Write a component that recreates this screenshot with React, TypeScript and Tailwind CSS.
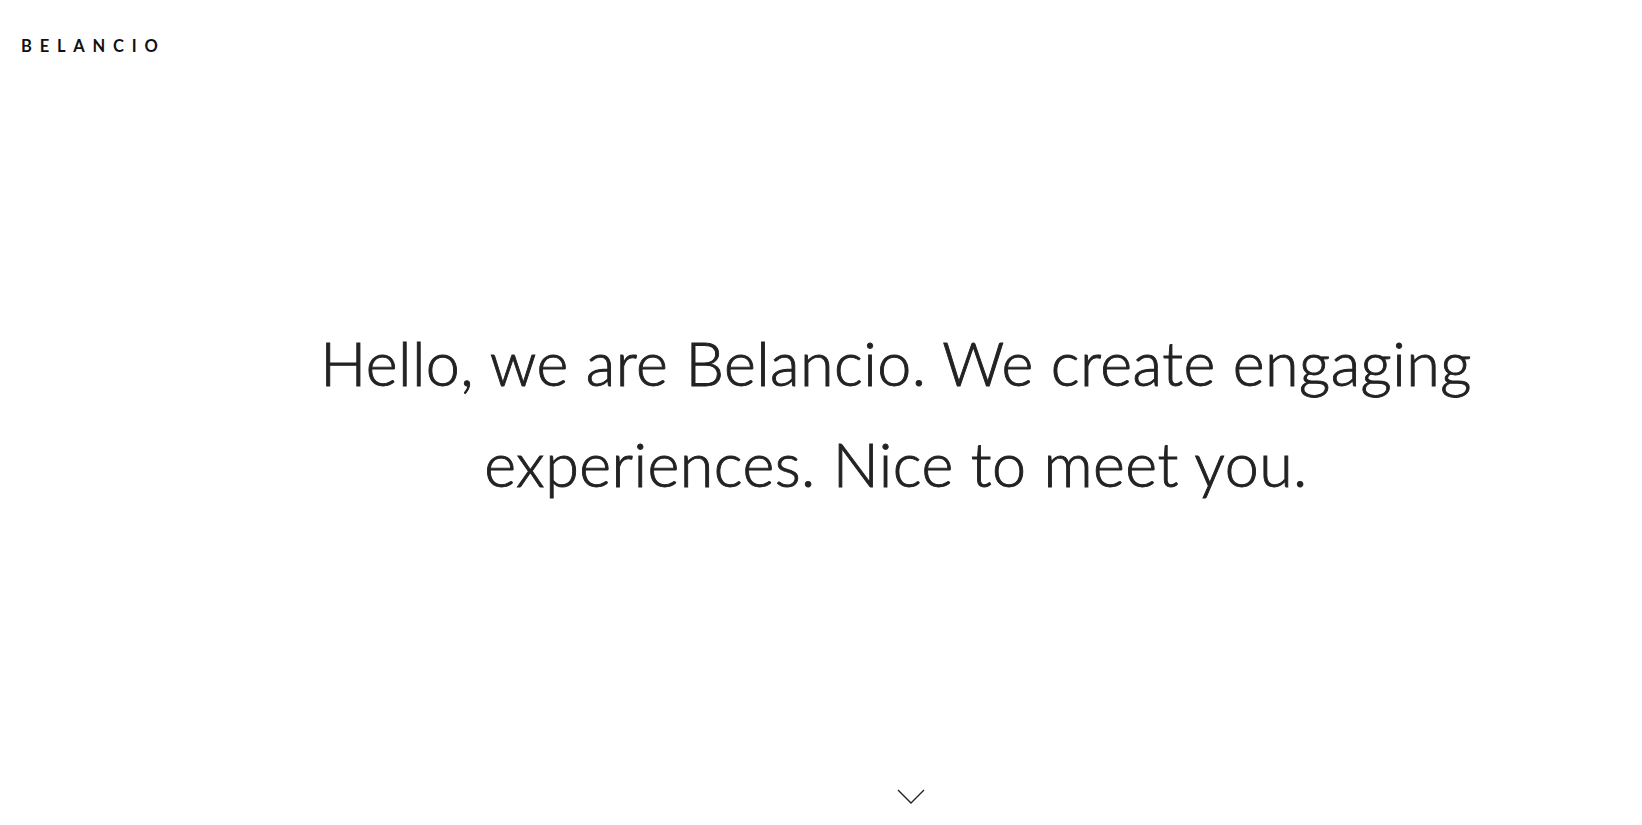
import { useState } from "react";

function ScrollHint() {
  return (
    <svg width="28" height="15" viewBox="0 0 28 15" fill="none" className="text-[#222]">
      <path d="M1 1L14 14L27 1" stroke="currentColor" strokeWidth="1.4" />
    </svg>
  );
}

export default function App() {
  const [hover, setHover] = useState(false);

  return (
    <main
      className="flex h-[825px] w-full flex-col bg-white text-[#222]"
      style={{ fontFamily: "Lato, 'Noto Sans', sans-serif" }}
    >
      <header className="px-[21px] pt-[36px] leading-[20px]">
        <a href="#" className="text-[16.5px] font-bold tracking-[7.8px] text-[#111]">
          BELANCIO
        </a>
      </header>

      <section className="flex flex-1 flex-col items-center pl-[150px]">
        <h1 className="mt-[256px] text-center text-[61px] leading-[101px] font-light tracking-[0.45px] [-webkit-text-stroke:0.9px_#222]">
          Hello, we are Belancio. We create engaging
          <br />
          experiences. Nice to meet you.
        </h1>

        <button
          className="mt-auto mb-[21px] ml-[30px] cursor-pointer"
          onMouseEnter={() => setHover(true)}
          onMouseLeave={() => setHover(false)}
          aria-label="Scroll down"
        >
          <span className={hover ? "opacity-60" : ""}>
            <ScrollHint />
          </span>
        </button>
      </section>
    </main>
  );
}
